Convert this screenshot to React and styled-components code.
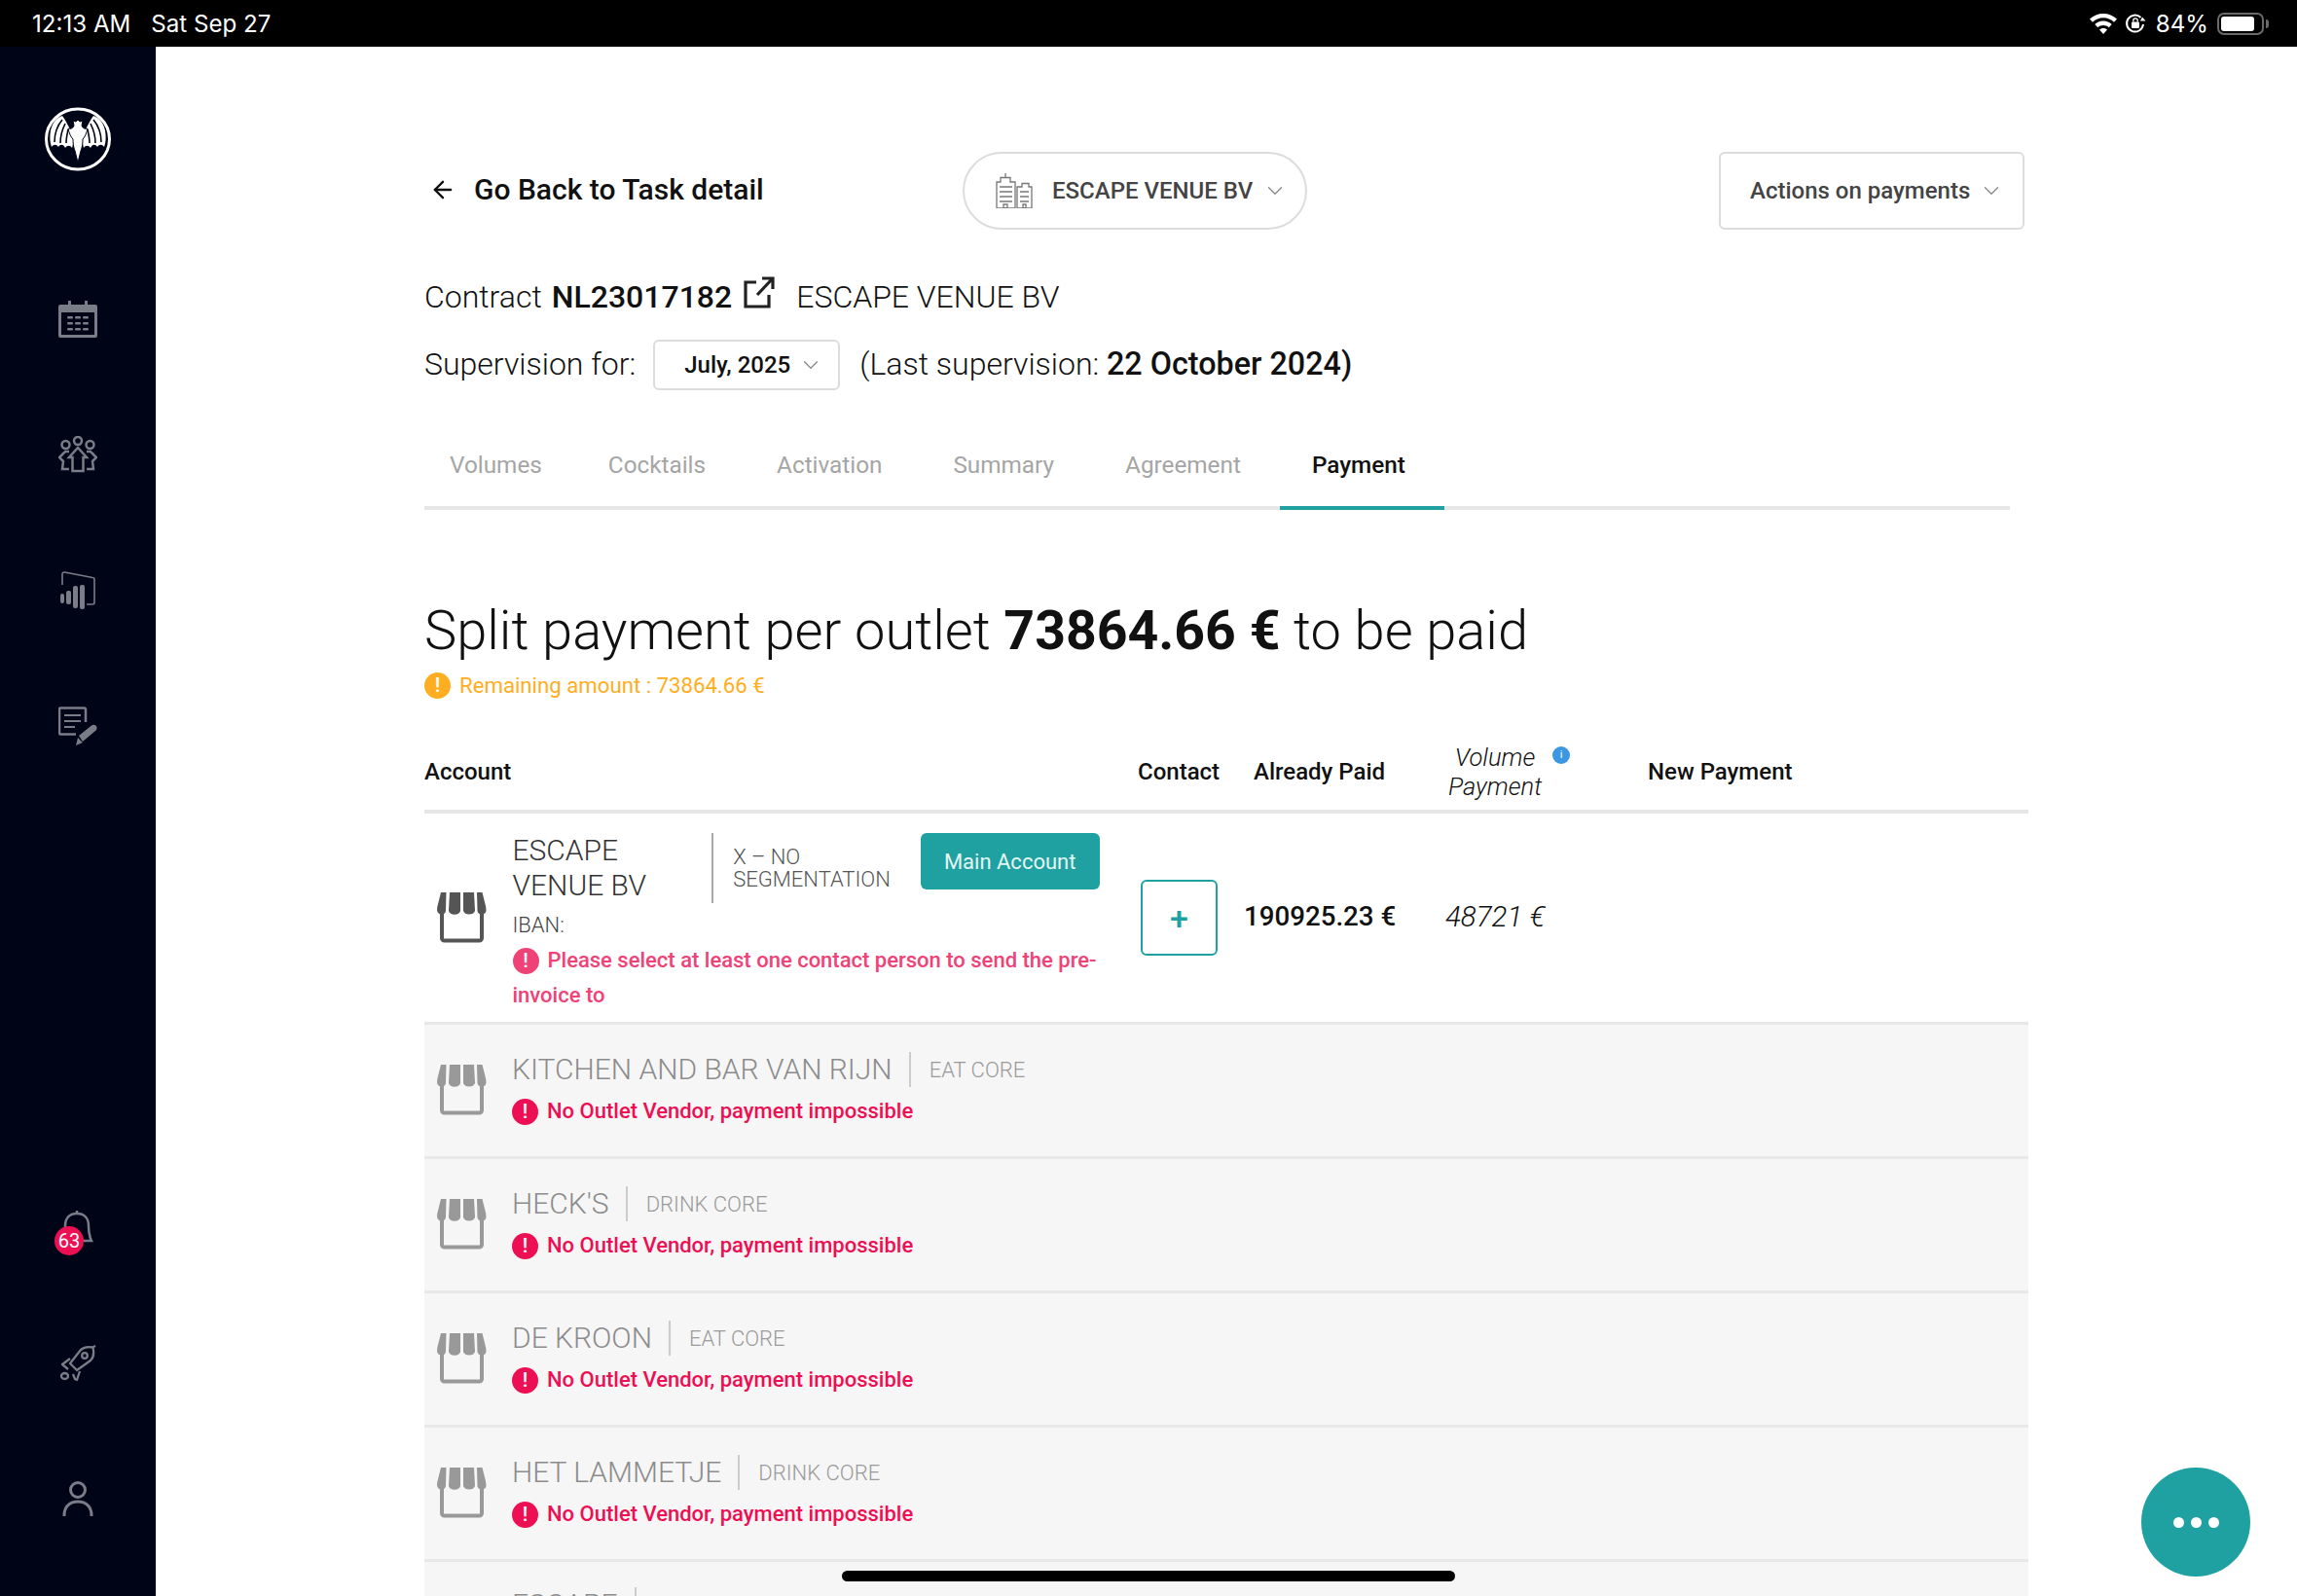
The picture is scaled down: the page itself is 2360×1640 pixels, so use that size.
import React from 'react'
import styled, { createGlobalStyle } from 'styled-components'
import { ArrowLeft, ChevronDown } from 'lucide-react'

const GlobalStyle = createGlobalStyle`
  html, body {
    margin: 0;
    padding: 0;
    height: 100%;
    overflow: hidden;
    background: #fff;
  }
  * { box-sizing: border-box; }
  body { font-family: Roboto, "Liberation Sans", sans-serif; color: #111; }
`

const outlets = [
  { name: 'KITCHEN AND BAR VAN RIJN', tag: 'EAT CORE' },
  { name: "HECK'S", tag: 'DRINK CORE' },
  { name: 'DE KROON', tag: 'EAT CORE' },
  { name: 'HET LAMMETJE', tag: 'DRINK CORE' },
  { name: 'ESCAPE', tag: '' },
]

const tabs = ['Volumes', 'Cocktails', 'Activation', 'Summary', 'Agreement', 'Payment']

const StoreIcon = ({ color }) => (
  <StoreSvg viewBox="0 0 51 52">
    <path d="M5 20V47a2.500 2.500 0 0 0 2.500 2.500h36a2.500 2.500 0 0 0 2.500-2.500V20" fill="none" stroke={color} strokeWidth="4" />
    <path d="M4 0h5.500L9 19a4 4 0 0 1-4.500 3.500C2 22.500 0 20.500 0 18q0-3 1.500-8Z" fill={color} />
    <path d="M13 0h11v18.500a5.500 4 0 0 1-12 0Z" fill={color} />
    <path d="M27 0h11l1 18.500a6 4 0 0 1-12 0Z" fill={color} />
    <path d="M46.500 0H41l.5 19a4 4 0 0 0 4.500 3.500c2.500 0 4.500-1.500 4.500-4Q50.500 15 49 10Z" fill={color} />
  </StoreSvg>
)

const BatWing = () => (
  <>
    <path d="M27 25C24 19 21 13 18 9 12 11 8 16 6 24c-1 6-1 12 1 17 2-3 5-3 7 0 2-3 5-3 7 1 2-3 5-3 7 0l3-12Z" fill="#fff" />
    <path d="M18 13c-5 6-8 14-8 23M21 17c-3 6-5 12-5 20M24 23c-1 5-2 9-2 14" stroke="#000417" strokeWidth="1.600" fill="none" />
  </>
)

const BatLogo = () => (
  <svg width="68" height="66" viewBox="0 0 68 66">
    <ellipse cx="34" cy="33" rx="32.500" ry="31" fill="#000417" stroke="#fff" strokeWidth="3" />
    <BatWing />
    <g transform="translate(68 0) scale(-1 1)"><BatWing /></g>
    <path
      d="M34 13l-2 2-3-1 1 5c-1 3-4 4-6 3 1 5 3 9 5 11 0 6 1 9 2 12 1 4 2 8 3 12 1-4 2-8 3-12 1-3 2-6 2-12 2-2 4-6 5-11-2 1-5 0-6-3l1-5-3 1Z"
      fill="#fff"
      stroke="#000417"
      strokeWidth="1"
    />
  </svg>
)

const navTop = [
  <svg key="cal" width="40" height="38" viewBox="0 0 40 38">
    <path d="M2 4h8V0h3v4h14V0h3v4h8a2 2 0 0 1 2 2v30a2 2 0 0 1-2 2H2a2 2 0 0 1-2-2V6a2 2 0 0 1 2-2Z" fill="#7a7c87" />
    <rect x="3" y="12" width="34" height="23" fill="#000417" />
    {[9, 17, 25].map((x) => [16, 22, 28].map((y) => (
      <rect key={`${x}${y}`} x={x} y={y} width="6" height="2.500" rx="1.200" fill="#7a7c87" />
    )))}
  </svg>,
  <svg key="people" width="40" height="38" viewBox="0 0 40 38" fill="none" stroke="#7a7c87" strokeWidth="2.500">
    <circle cx="20" cy="5" r="4" />
    <circle cx="7.500" cy="9" r="4" />
    <circle cx="32.500" cy="9" r="4" />
    <path d="M20 12l9 10h-3.500v14h-11V22H11Z" />
    <path d="M11 16H7l-6 6 4 4-1 8h7" />
    <path d="M29 16h4l6 6-4 4 1 8h-7" />
  </svg>,
  <svg key="chart" width="36" height="40" viewBox="0 0 36 40" fill="none">
    <path d="M2 14V3a2 2 0 0 1 2.400-2L33 6.500a2 2 0 0 1 2 2V32a2 2 0 0 1-2 2h-6" stroke="#7a7c87" strokeWidth="1.600" />
    <rect x="0" y="23" width="4" height="10" rx="2" fill="#7a7c87" />
    <rect x="6" y="20" width="5" height="14" rx="2" fill="#7a7c87" />
    <rect x="13" y="15" width="5" height="23" rx="2" fill="#7a7c87" />
    <rect x="20" y="14" width="5" height="25" rx="2" fill="#7a7c87" />
  </svg>,
  <svg key="note" width="40" height="40" viewBox="0 0 40 40" fill="none">
    <path d="M28 16V3a1.500 1.500 0 0 0-1.500-1.500h-24A1.500 1.500 0 0 0 1 3v24a1.500 1.500 0 0 0 1.500 1.500H18" stroke="#7a7c87" strokeWidth="2.500" />
    <path d="M6 9h17M6 15h17M6 21h11" stroke="#7a7c87" strokeWidth="2.200" />
    <path d="M21 30L34 19.500c2-1.500 5-.5 5.500 2 .3 1.500-.3 2.500-1.500 3.500L25 36ZM18 40l2-8 5 5Z" fill="#7a7c87" />
  </svg>,
]

const Sidebar = () => (
  <Side>
    <LogoSlot><BatLogo /></LogoSlot>
    {navTop.map((icon, i) => <NavSlot key={i}>{icon}</NavSlot>)}
    <BottomNav>
      <NavSlot>
        <svg width="32" height="34" viewBox="0 0 32 34" fill="none" stroke="#7a7c87" strokeWidth="2.500">
          <path d="M3 31V16C3 7 8 3 15 3s12 4 12 13c0 7 1 11 3 15H3Z" />
          <path d="M15 0v3" />
        </svg>
        <Badge>63</Badge>
      </NavSlot>
      <NavSlot>
        <svg width="38" height="38" viewBox="0 0 38 38" fill="none" stroke="#7a7c87" strokeWidth="2.300" strokeLinejoin="round">
          <path d="M37 1l-3 1.500c-5-1-9 0-12 2.500L11 19l7 7 14-10c3-3 4-7 2.500-13" />
          <circle cx="26" cy="11" r="2.800" />
          <path d="M11 14L3 20l6 5M21 27l-3 9-2-1-2-5" />
          <ellipse cx="5.500" cy="32" rx="3.500" ry="3" />
        </svg>
      </NavSlot>
      <NavSlot>
        <svg width="32" height="36" viewBox="0 0 32 36" fill="none" stroke="#7a7c87" strokeWidth="3" strokeLinecap="round">
          <circle cx="16" cy="9" r="7.500" />
          <path d="M2 35c0-9 6-14 14-14s14 5 14 14" />
        </svg>
      </NavSlot>
    </BottomNav>
  </Side>
)

const StatusBar = () => (
  <Status>
    <StatusGroup>
      <span>12:13 AM</span>
      <span>Sat Sep 27</span>
    </StatusGroup>
    <StatusGroup $right>
      <svg width="28" height="21" viewBox="0 0 28 21" fill="#fff">
        <path d="M14 0C8.500 0 4 2 0 5.500l3 3.300C6 6 10 4.300 14 4.300s8 1.700 11 4.500l3-3.300C24 2 19.500 0 14 0Z" />
        <path d="M14 7.500c-3.500 0-6.500 1.300-8.700 3.500l3 3.200c1.500-1.400 3.500-2.300 5.700-2.300s4.200.9 5.700 2.300l3-3.200C20.500 8.800 17.500 7.500 14 7.500Z" />
        <path d="M14 15c-1.700 0-3 .6-4 1.600l4 4.400 4-4.400c-1-1-2.300-1.600-4-1.600Z" />
      </svg>
      <svg width="22" height="22" viewBox="0 0 22 22" fill="none" stroke="#fff" strokeWidth="2">
        <path d="M19 12a8.500 8.500 0 1 1-2.500-7" />
        <path d="M21.500 8.500h-5.500l2-4Z" fill="#fff" stroke="none" />
        <rect x="7" y="9.500" width="8" height="6.500" rx="1" fill="#fff" stroke="none" />
        <path d="M8.800 9.500V8a2.200 2.200 0 0 1 4.400 0v1.500" strokeWidth="1.300" />
      </svg>
      <Percent>84%</Percent>
      <Battery><BatteryFill /></Battery>
    </StatusGroup>
  </Status>
)

const App = () => {
  return (
    <Page>
      <GlobalStyle />
      <StatusBar />
      <Body>
        <Sidebar />
        <Main>
          <TopRow>
            <BackLink>
              <ArrowLeft size={28} strokeWidth={2} />
              <span>Go Back to Task detail</span>
            </BackLink>
            <VenuePill>
              <svg width="38" height="36" viewBox="0 0 38 36" fill="none" stroke="#777" strokeWidth="1.300">
                <path d="M10 0v4M5 4.500h10V9h5v27H1V9h4ZM4 14h13M4 19h13M4 24h13M4 29h13" />
                <path d="M27 10.500h7V14h3v22H22V14h5ZM25 19h9M25 24h9M25 29h9" />
                <path d="M8 32h4v4H8zM28 32h3v4h-3z" />
              </svg>
              <span>ESCAPE VENUE BV</span>
              <Chevron size={26} />
            </VenuePill>
            <ActionsButton>
              <span>Actions on payments</span>
              <Chevron size={26} />
            </ActionsButton>
          </TopRow>

          <ContractLine>
            Contract <b>NL23017182</b>
            <svg width="33" height="34" viewBox="0 0 33 34" fill="none" stroke="#222" strokeWidth="3.200">
              <path d="M14 6H3v25h24V19" />
              <path d="M15 19L30 3M20 2h11v11" />
            </svg>
            <span>ESCAPE VENUE BV</span>
          </ContractLine>

          <SupervisionLine>
            <span>Supervision for:</span>
            <MonthSelect>
              <span>July, 2025</span>
              <Chevron size={26} />
            </MonthSelect>
            <span>(Last supervision: <b>22 October 2024)</b></span>
          </SupervisionLine>

          <TabBar>
            {tabs.map((t) => (
              <Tab key={t} $active={t === 'Payment'}>{t}</Tab>
            ))}
          </TabBar>

          <Heading>Split payment per outlet <b>73864.66 €</b> to be paid</Heading>
          <Remaining>
            <AlertDot $color="#ffae22">!</AlertDot>
            Remaining amount : 73864.66 €
          </Remaining>

          <Table>
            <HeaderRow>
              <HeadCell>Account</HeadCell>
              <HeadCell>Contact</HeadCell>
              <HeadCell>Already Paid</HeadCell>
              <VolumeHead>
                Volume<br />Payment
                <InfoDot>i</InfoDot>
              </VolumeHead>
              <HeadCell>New Payment</HeadCell>
            </HeaderRow>

            <MainRow>
              <AccountCell>
                <StoreIcon color="#555" />
                <MainInfo>
                  <MainTop>
                    <MainName>ESCAPE VENUE BV</MainName>
                    <Segment>X – NO SEGMENTATION</Segment>
                    <MainBadge>Main Account</MainBadge>
                  </MainTop>
                  <Iban>IBAN:</Iban>
                  <ErrorText $color="#ef4277">
                    <AlertDot $color="#ef4277">!</AlertDot>
                    Please select at least one contact person to send the pre-invoice to
                  </ErrorText>
                </MainInfo>
              </AccountCell>
              <AddButton>+</AddButton>
              <Amount>190925.23 €</Amount>
              <VolumeAmount>48721 €</VolumeAmount>
            </MainRow>

            {outlets.map((o) => (
              <OutletRow key={o.name}>
                <StoreIcon color="#999" />
                <OutletInfo>
                  <OutletTop>
                    <OutletName>{o.name}</OutletName>
                    {o.tag && <OutletTag>{o.tag}</OutletTag>}
                  </OutletTop>
                  <ErrorText $color="#ed0f54">
                    <AlertDot $color="#ed0f54">!</AlertDot>
                    No Outlet Vendor, payment impossible
                  </ErrorText>
                </OutletInfo>
              </OutletRow>
            ))}
          </Table>
        </Main>
      </Body>
      <HomeBar />
      <Fab>
        <FabDot /><FabDot /><FabDot />
      </Fab>
    </Page>
  )
}

const Page = styled.div`
  position: relative;
  width: 2360px;
  height: 1640px;
  overflow: hidden;
  display: flex;
  flex-direction: column;
`

const Status = styled.div`
  height: 48px;
  flex: none;
  background: #000;
  color: #fff;
  display: flex;
  justify-content: space-between;
  align-items: center;
  padding: 0 28px 0 33px;
  font-family: Inter, Roboto, sans-serif;
  font-size: 24.100px;
`

const StatusGroup = styled.div`
  display: flex;
  align-items: center;
  gap: ${(p) => (p.$right ? '8px' : '21px')};
`

const Percent = styled.span`
  margin-left: 1.500px;
`

const Battery = styled.div`
  position: relative;
  width: 48px;
  height: 23px;
  border: 2px solid #6a6a6a;
  border-radius: 7px;
  padding: 2px;
  margin-left: 1px;
  margin-right: 6px;

  &::after {
    content: '';
    position: absolute;
    right: -7px;
    top: 5px;
    width: 3px;
    height: 9px;
    border-radius: 0 3px 3px 0;
    background: #6a6a6a;
  }
`

const BatteryFill = styled.div`
  width: 84%;
  height: 100%;
  border-radius: 3px;
  background: #fff;
`

const Body = styled.div`
  flex: 1;
  display: flex;
  min-height: 0;
`

const Side = styled.nav`
  width: 160px;
  flex: none;
  background: #000417;
  display: flex;
  flex-direction: column;
  align-items: center;
  padding: 62px 0 30px;
`

const LogoSlot = styled.div`
  height: 66px;
  margin-bottom: 82px;
`

const NavSlot = styled.div`
  position: relative;
  height: 139.500px;
  display: flex;
  align-items: center;
  justify-content: center;
`

const BottomNav = styled.div`
  margin-top: auto;
  display: flex;
  flex-direction: column;
`

const Badge = styled.span`
  position: absolute;
  left: -5px;
  top: 68px;
  width: 30px;
  height: 30px;
  border-radius: 50%;
  background: #ed0f54;
  color: #fff;
  font-size: 20px;
  display: flex;
  align-items: center;
  justify-content: center;
`

const Main = styled.main`
  flex: 1;
  padding: 108px 0 0 276px;
  min-width: 0;
`

const TopRow = styled.div`
  width: 1644px;
  display: grid;
  grid-template-columns: 553px 1fr auto;
  align-items: center;
`

const BackLink = styled.div`
  display: flex;
  align-items: center;
  gap: 18px;
  padding: 0 0 3px 5px;
  font-size: 30px;
  font-weight: 500;
`

const VenuePill = styled.div`
  justify-self: start;
  height: 80px;
  width: 354px;
  border: 2px solid #dcdcdc;
  border-radius: 40px;
  display: flex;
  align-items: center;
  padding-left: 32px;
  gap: 10px;
  font-size: 24px;
  font-weight: 500;
  color: #444;

  svg:first-child { margin-right: 10px; }
`

const Chevron = styled(ChevronDown)`
  color: #888;
  stroke-width: 1.200;
  flex: none;
`

const ActionsButton = styled.div`
  height: 80px;
  width: 314px;
  border: 2px solid #dcdcdc;
  border-radius: 6px;
  display: flex;
  align-items: center;
  padding-left: 30px;
  gap: 9px;
  font-size: 24px;
  font-weight: 500;
  color: #444;
`

const ContractLine = styled.div`
  margin-top: 46px;
  height: 46px;
  display: flex;
  align-items: center;
  gap: 10px;
  font-size: 32px;
  font-weight: 300;

  b { font-weight: 500; }
  svg { margin: -8px 0 0 1px; }
  span { margin-left: 12px; }
`

const SupervisionLine = styled.div`
  margin-top: 21px;
  height: 52px;
  display: flex;
  align-items: center;
  font-size: 32px;
  font-weight: 300;

  > span { padding-bottom: 2px; }
  b { font-size: 32.300px; font-weight: 500; }
`

const MonthSelect = styled.div`
  width: 192px;
  height: 52px;
  margin: 0 20px 0 18px;
  border: 2px solid #dcdcdc;
  border-radius: 6px;
  display: flex;
  align-items: center;
  padding-left: 30px;
  gap: 8px;
  font-size: 24px;
  font-weight: 500;
`

const TabBar = styled.div`
  margin-top: 59px;
  width: 1629px;
  height: 64px;
  padding-left: 26px;
  border-bottom: 4px solid #e6e6e6;
  display: flex;
`

const Tab = styled.div`
  height: 64px;
  padding: 0 40px 26px 33px;
  display: flex;
  align-items: center;
  font-size: 24.300px;
  font-weight: ${(p) => (p.$active ? 500 : 400)};
  color: ${(p) => (p.$active ? '#111' : '#a5a5a5')};
  border-bottom: 4px solid ${(p) => (p.$active ? '#1fa1a1' : 'transparent')};

  &:first-child { padding: 0 35px 26px 0; }
`

const Heading = styled.h1`
  margin: 89px 0 0;
  height: 70px;
  line-height: 70px;
  font-size: 56px;
  font-weight: 300;
  white-space: nowrap;

  b { font-size: 55.400px; font-weight: 700; }
`

const Remaining = styled.div`
  margin-top: 3px;
  height: 36px;
  display: flex;
  align-items: center;
  font-size: 22.200px;
  color: #ffae22;
`

const AlertDot = styled.span`
  display: inline-flex;
  align-items: center;
  justify-content: center;
  width: 27px;
  height: 27px;
  margin-right: 9px;
  border-radius: 50%;
  background: ${(p) => p.$color};
  color: #fff;
  font-size: 21px;
  font-weight: 500;
  vertical-align: 0;
`

const Table = styled.div`
  margin-top: 41px;
  width: 1648px;
`

const HeaderRow = styled.div`
  display: grid;
  grid-template-columns: 733px 119px 180px 225px 1fr;
  align-items: center;
  height: 73px;
  border-bottom: 4px solid #e6e6e6;
  padding-bottom: 9px;
`

const HeadCell = styled.div`
  font-size: 24px;
  font-weight: 500;
`

const VolumeHead = styled.div`
  position: relative;
  width: 136px;
  font-size: 25.500px;
  font-weight: 300;
  font-style: italic;
  line-height: 30px;
  text-align: center;
`

const InfoDot = styled.span`
  position: absolute;
  left: 127px;
  top: 4px;
  width: 18px;
  height: 18px;
  border-radius: 50%;
  background: #3b97e3;
  color: #fff;
  font-size: 11px;
  font-style: normal;
  font-weight: 400;
  line-height: 18px;
`

const MainRow = styled.div`
  display: grid;
  grid-template-columns: 733px 106px 207px auto 1fr;
  align-items: center;
  height: 217px;
  border-bottom: 3px solid #e8e8e8;
`

const AccountCell = styled.div`
  display: flex;
  align-items: center;
  padding-left: 13px;
`

const StoreSvg = styled.svg`
  width: 51px;
  height: 52px;
  flex: none;
`

const MainInfo = styled.div`
  margin: 11px 0 0 26.500px;
  width: 603px;
`

const MainTop = styled.div`
  display: flex;
  align-items: center;
  height: 72px;
  margin-bottom: 5px;
`

const MainName = styled.div`
  width: 207px;
  height: 72px;
  padding-right: 40px;
  border-right: 2px solid #aaa;
  font-size: 30px;
  font-weight: 300;
  line-height: 36px;
  color: #333;
`

const Segment = styled.div`
  width: 193px;
  margin-left: 20px;
  font-size: 22px;
  font-weight: 300;
  line-height: 23px;
  color: #555;
`

const MainBadge = styled.div`
  width: 184px;
  height: 58px;
  align-self: flex-start;
  border-radius: 6px;
  background: #1fa1a1;
  color: #e4f6f4;
  font-size: 22px;
  display: flex;
  align-items: center;
  justify-content: center;
`

const Iban = styled.div`
  font-size: 22px;
  font-weight: 300;
  line-height: 36px;
  color: #444;
`

const ErrorText = styled.div`
  font-size: 22px;
  font-weight: 500;
  line-height: 36px;
  color: ${(p) => p.$color};
`

const AddButton = styled.div`
  width: 79px;
  height: 78px;
  margin-left: 3px;
  border: 2px solid #1fa1a1;
  border-radius: 6px;
  color: #1fa1a1;
  font-size: 34px;
  font-weight: 500;
  display: flex;
  align-items: center;
  justify-content: center;
`

const Amount = styled.div`
  padding: 0 0 3px 3px;
  font-size: 27.700px;
  font-weight: 500;
`

const VolumeAmount = styled.div`
  padding: 0 0 2px 3px;
  font-size: 29.500px;
  font-weight: 300;
  font-style: italic;
`

const OutletRow = styled.div`
  height: 138px;
  display: flex;
  align-items: flex-start;
  padding: 28px 0 0 13px;
  background: #f6f6f6;
  border-bottom: 3px solid #e8e8e8;

  > svg { margin-top: 13px; }
  &:last-child { padding-top: 26px; }
`

const OutletInfo = styled.div`
  margin-left: 26px;
`

const OutletTop = styled.div`
  display: flex;
  align-items: center;
  margin-bottom: 7px;
`

const OutletName = styled.div`
  padding-right: 17px;
  border-right: 2px solid #ccc;
  font-size: 30px;
  font-weight: 300;
  line-height: 36px;
  color: #8c8c8c;
`

const OutletTag = styled.div`
  margin-left: 19px;
  font-size: 22px;
  font-weight: 300;
  color: #9a9a9a;
`

const HomeBar = styled.div`
  position: absolute;
  left: 865px;
  bottom: 15px;
  width: 630px;
  height: 11px;
  border-radius: 6px;
  background: #000;
`

const Fab = styled.div`
  position: absolute;
  left: 2200px;
  top: 1508px;
  width: 112px;
  height: 112px;
  border-radius: 50%;
  background: #1fa1a1;
  display: flex;
  align-items: center;
  justify-content: center;
  gap: 7px;
`

const FabDot = styled.span`
  width: 11px;
  height: 11px;
  border-radius: 50%;
  background: #fff;
`

export default App
